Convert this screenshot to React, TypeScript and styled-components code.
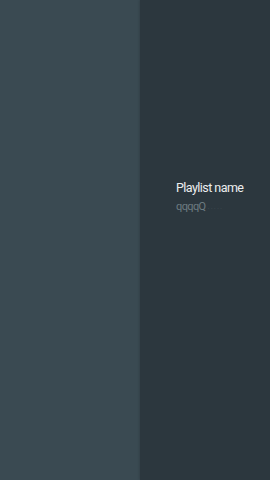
import React from "react";
import styled, { createGlobalStyle } from "styled-components";

const Global = createGlobalStyle`
  html, body { margin: 0; padding: 0; width: 270px; height: 480px; overflow: hidden; }
  body { font-family: Roboto, "Noto Sans", sans-serif; }
`;

const Screen = styled.div`
  display: flex;
  width: 270px;
  height: 480px;
`;

const LeftPane = styled.div`
  width: 140px;
  background: #3a4a52;
`;

const RightPane = styled.div`
  flex: 1;
  background: #2c373e;
  box-shadow: -1px 0 2px rgba(0, 0, 0, 0.12);
  display: flex;
  flex-direction: column;
  justify-content: center;
  padding-left: 36px;
  padding-bottom: 86px;
  box-sizing: border-box;
`;

const Title = styled.div`
  color: #eceeef;
  font-size: 12.5px;
  line-height: 16px;
  letter-spacing: -0.55px;
`;

const Field = styled.div`
  margin-top: 4px;
  color: #6d7b81;
  font-size: 11px;
  line-height: 14px;
  letter-spacing: -0.6px;
  display: flex;
  align-items: flex-end;
`;

const Hint = styled.span`
  color: #3e4a50;
  margin-left: 2px;
  letter-spacing: 1px;
  font-size: 8px;
`;

export default function App() {
  return (
    <>
      <Global />
      <Screen>
        <LeftPane />
        <RightPane>
          <Title>Playlist name</Title>
          <Field>
            qqqqQ<Hint>.....</Hint>
          </Field>
        </RightPane>
      </Screen>
    </>
  );
}
